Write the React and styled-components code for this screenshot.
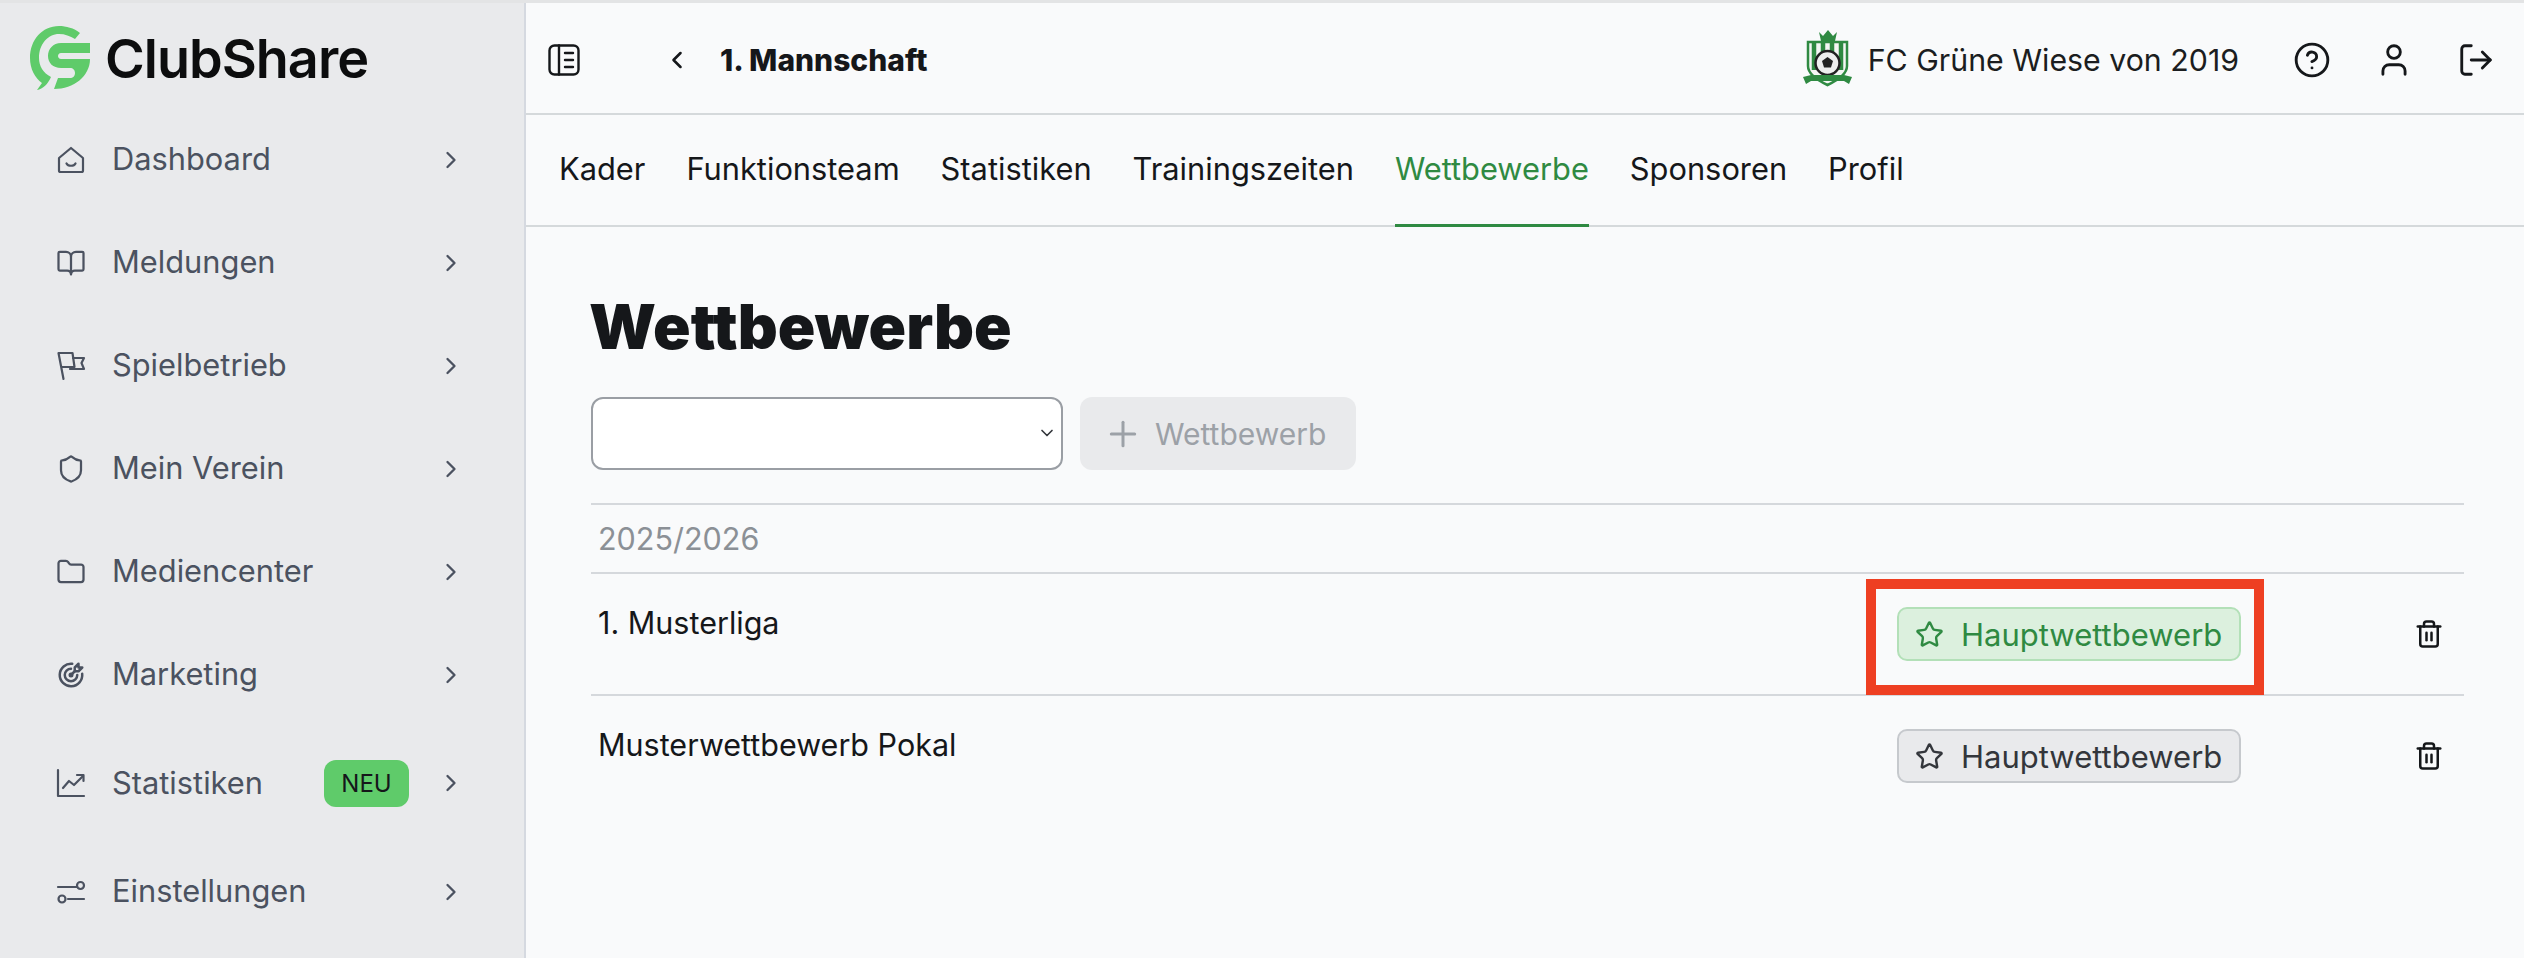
import React from 'react';
import styled, { createGlobalStyle } from 'styled-components';
import {
  BookOpen, ChevronDown, ChevronLeft, ChevronRight, CircleHelp, Folder, LogOut,
  Plus, Shield, Star, Trash2, User,
} from 'lucide-react';
import { TbTargetArrow } from 'react-icons/tb';

const GlobalStyle = createGlobalStyle`
  html, body { margin: 0; padding: 0; }
  body {
    background: #f9fafb;
    color: #15171a;
    font-family: Inter, "Noto Sans", sans-serif;
  }
  * { box-sizing: border-box; }
`;

const Page = styled.div`
  display: grid;
  grid-template-columns: 526px 1fr;
  height: 958px;
  overflow: hidden;
  border-top: 3px solid #e3e4e5;
`;

const Sidebar = styled.aside`
  background: #e9eaec;
  border-right: 2px solid #d5d9e0;
`;

const Brand = styled.div`
  display: flex;
  align-items: center;
  gap: 15px;
  height: 105px;
  padding: 6px 0 0 30px;
`;

const BrandName = styled.span`
  font-size: 54px;
  font-weight: 600;
  letter-spacing: -1px;
  color: #0c0d0e;
`;

const NavRow = styled.div`
  display: flex;
  align-items: center;
  height: ${(p) => (p.$tall ? '114px' : '103px')};
  padding: 0 59px 0 56px;
  color: #4b5260;
  font-size: 30.8px;
`;

const NavIcon = styled.span`
  display: flex;
  width: 30px;
  margin-right: 26px;
`;

const NavLabel = styled.span`
  flex: 1;
  margin-top: -2px;
`;

const NewBadge = styled.span`
  display: flex;
  align-items: center;
  justify-content: center;
  width: 85px;
  height: 47px;
  margin-right: 28px;
  border-radius: 12px;
  background: #5fcb6a;
  color: #15171a;
  font-size: 24px;
`;

const Main = styled.main`
  display: flex;
  flex-direction: column;
  min-width: 0;
`;

const TopBar = styled.header`
  display: flex;
  align-items: center;
  height: 112px;
  padding: 3px 29px 0 22px;
  border-bottom: 2px solid #d5d9db;
`;

const BackButton = styled.span`
  display: flex;
  margin-left: 83px;
  margin-right: 29px;
`;

const TeamTitle = styled.span`
  flex: 1;
  font-size: 30px;
  font-weight: 800;
`;

const Club = styled.div`
  display: flex;
  align-items: center;
  gap: 15px;
  margin-right: 54px;
  font-size: 30.3px;
  color: #1b1d20;
`;

const Actions = styled.div`
  display: flex;
  align-items: center;
  gap: 44px;
`;

const Tabs = styled.nav`
  display: flex;
  gap: 41px;
  height: 112px;
  padding: 0 0 0 33px;
  border-bottom: 2px solid #d5d9db;
`;

const Tab = styled.span`
  display: flex;
  align-items: center;
  height: 112px;
  padding-bottom: 2px;
  border-bottom: 3px solid ${(p) => (p.$active ? '#2f8a42' : 'transparent')};
  color: ${(p) => (p.$active ? '#2f8a42' : '#15171a')};
  font-size: 30.8px;
`;

const Content = styled.section`
  padding: 60px 60px 0 65px;
`;

const Heading = styled.h1`
  margin: 0 0 30px -2px;
  font-size: 62px;
  line-height: 80px;
  font-weight: 900;
  color: #15171a;
`;

const Controls = styled.div`
  display: flex;
  gap: 17px;
  margin-bottom: 33px;
`;

const SelectWrap = styled.div`
  position: relative;
  width: 472px;
`;

const Select = styled.select`
  width: 100%;
  height: 73px;
  appearance: none;
  background: #fff;
  border: 2px solid #9a9ea4;
  border-radius: 12px;
`;

const SelectArrow = styled(ChevronDown)`
  position: absolute;
  right: 6px;
  top: 26px;
  color: #33363b;
`;

const AddButton = styled.button`
  display: flex;
  align-items: center;
  gap: 12px;
  width: 276px;
  height: 73px;
  padding: 0 0 0 23px;
  border: none;
  border-radius: 12px;
  background: #e9eaec;
  color: #9ca1a7;
  font-family: inherit;
  font-size: 30px;
`;

const SeasonRow = styled.div`
  height: 71px;
  padding: 0 7px;
  display: flex;
  align-items: center;
  border-top: 2px solid #d5d8dc;
  border-bottom: 2px solid #d5d8dc;
  color: #8b9096;
  font-size: 30.5px;
`;

const Row = styled.div`
  display: flex;
  align-items: flex-start;
  height: ${(p) => (p.$last ? '120px' : '122px')};
  padding-top: 33px;
  border-bottom: ${(p) => (p.$last ? 'none' : '2px solid #d5d8dc')};
`;

const RowName = styled.span`
  flex: 1;
  margin-top: -2px;
  padding-left: 7px;
  font-size: 30.5px;
  line-height: 36px;
`;

const ButtonCell = styled.div`
  position: relative;
`;

const MainButton = styled.button`
  display: flex;
  align-items: center;
  gap: 17px;
  width: 344px;
  height: 54px;
  padding: 0 0 0 16px;
  border-radius: 10px;
  border: 2px solid ${(p) => (p.$active ? '#b3e0b8' : '#c6c9cd')};
  background: ${(p) => (p.$active ? '#dcf0de' : '#e9eaec')};
  color: ${(p) => (p.$active ? '#2f8a42' : '#33363b')};
  font-family: inherit;
  font-size: 31px;
`;

const Highlight = styled.div`
  position: absolute;
  left: -31px;
  right: -23px;
  top: -28px;
  bottom: -34px;
  border: 10px solid #ee3f22;
  pointer-events: none;
`;

const TrashCell = styled.div`
  display: flex;
  justify-content: flex-end;
  width: 223px;
  padding: 12px 20px 0 0;
`;

const HomeIcon = () => (
  <svg width="30" height="30" viewBox="0 0 30 30" fill="none" stroke="currentColor" strokeWidth="2.2" strokeLinecap="round" strokeLinejoin="round">
    <path d="M3 13 15 3l12 10v12.500a1.500 1.500 0 0 1-1.500 1.500h-21A1.500 1.500 0 0 1 3 25.500Z" />
    <path d="M10.500 18.500c1.500 3 7.500 3 9 0" />
  </svg>
);

const FlagIcon = () => (
  <svg width="30" height="30" viewBox="0 0 30 30" fill="none" stroke="currentColor" strokeWidth="2.2" strokeLinecap="round" strokeLinejoin="round">
    <path d="M7.500 28 2.500 2h14l2 14H6" />
    <path d="M17 7h11l-2.500 5 2.500 6H14l4-2" />
  </svg>
);

const ChartIcon = () => (
  <svg width="30" height="30" viewBox="0 0 30 30" fill="none" stroke="currentColor" strokeWidth="2.2" strokeLinecap="round" strokeLinejoin="round">
    <path d="M2 2v26h26" />
    <path d="M7 20l6-7 5 4 9-9" />
    <path d="M21 7h6.500v6" />
  </svg>
);

const SlidersIcon = () => (
  <svg width="30" height="30" viewBox="0 0 30 30" fill="none" stroke="currentColor" strokeWidth="2.2" strokeLinecap="round" strokeLinejoin="round">
    <path d="M2 10h19M12 22h16" />
    <circle cx="24.500" cy="8.500" r="3.500" />
    <circle cx="6" cy="22" r="3.500" />
  </svg>
);

const PanelIcon = () => (
  <svg width="32" height="32" viewBox="0 0 32 32" fill="none" stroke="#15171a" strokeWidth="2.400" strokeLinecap="round" strokeLinejoin="round">
    <rect x="1.500" y="1.500" width="29" height="29" rx="5" />
    <path d="M11 1.500v29M17 9h8M17 16h8M17 23h8" />
  </svg>
);

const Logo = () => (
  <svg width="60" height="65" viewBox="0 0 60 65">
    <path fill="#5fcb6a" d="M50 7C44 2 36 0 29 0 12 0 0 14 0 32 0 43 5 52 12 57L7 64C13 63 18 58 21 51 13 47 9 40 9 32 9 18 18 8 29 8 35 8 40 10 45 13Z" />
    <path fill="#5fcb6a" d="M60 17H31C23 17 18 23 18 30 18 37 23 42 31 42H40C43 42 45 44 45 47 45 50 43 52 40 52H28L24 63C44 63 60 50 60 33H31C29 33 28 31.500 28 30 28 28.500 29 27 31 27H60Z" />
  </svg>
);

const Crest = () => (
  <svg width="50" height="60" viewBox="0 0 50 60">
    <path fill="#2f8a42" d="M16 2 20 6 25 0 30 6 34 2 32 11H18Z" />
    <path fill="#f4f6f4" stroke="#2f8a42" strokeWidth="2.500" d="M5 12H44V36C44 44 33 51 24.500 55 16 51 5 44 5 36Z" />
    <path stroke="#2f8a42" strokeWidth="4.500" d="M11 13V40M20 13V24M29 13V24M38 13V40" />
    <circle cx="24.500" cy="33" r="12" fill="#eee" stroke="#222" strokeWidth="2.500" />
    <path fill="#222" d="M24.500 27l5.500 4-2 6.500h-7L19 31Z" />
    <path fill="#2f8a42" d="M0 47 8 45H41L49 47 46 54 41 51H8L3 54Z" />
  </svg>
);

const navItems = [
  { label: 'Dashboard', icon: <HomeIcon /> },
  { label: 'Meldungen', icon: <BookOpen size={30} strokeWidth={1.800} /> },
  { label: 'Spielbetrieb', icon: <FlagIcon /> },
  { label: 'Mein Verein', icon: <Shield size={30} strokeWidth={1.800} /> },
  { label: 'Mediencenter', icon: <Folder size={30} strokeWidth={1.800} /> },
  { label: 'Marketing', icon: <TbTargetArrow size={30} /> },
  { label: 'Statistiken', icon: <ChartIcon />, badge: 'NEU' },
  { label: 'Einstellungen', icon: <SlidersIcon /> },
];

const tabs = ['Kader', 'Funktionsteam', 'Statistiken', 'Trainingszeiten', 'Wettbewerbe', 'Sponsoren', 'Profil'];

export default function App() {
  return (
    <>
      <GlobalStyle />
      <Page>
        <Sidebar>
          <Brand>
            <Logo />
            <BrandName>ClubShare</BrandName>
          </Brand>
          {navItems.map((item) => (
            <NavRow key={item.label} $tall={!!item.badge}>
              <NavIcon>{item.icon}</NavIcon>
              <NavLabel>{item.label}</NavLabel>
              {item.badge && <NewBadge>{item.badge}</NewBadge>}
              <ChevronRight size={28} strokeWidth={2} />
            </NavRow>
          ))}
        </Sidebar>
        <Main>
          <TopBar>
            <PanelIcon />
            <BackButton><ChevronLeft size={28} strokeWidth={2.200} /></BackButton>
            <TeamTitle>1. Mannschaft</TeamTitle>
            <Club>
              <Crest />
              FC Grüne Wiese von 2019
            </Club>
            <Actions>
              <CircleHelp size={38} strokeWidth={1.800} />
              <User size={38} strokeWidth={1.800} />
              <LogOut size={38} strokeWidth={1.800} />
            </Actions>
          </TopBar>
          <Tabs>
            {tabs.map((t) => (
              <Tab key={t} $active={t === 'Wettbewerbe'}>{t}</Tab>
            ))}
          </Tabs>
          <Content>
            <Heading>Wettbewerbe</Heading>
            <Controls>
              <SelectWrap>
                <Select aria-label="Wettbewerb" />
                <SelectArrow size={20} strokeWidth={2} />
              </SelectWrap>
              <AddButton disabled><Plus size={40} strokeWidth={1.800} />Wettbewerb</AddButton>
            </Controls>
            <SeasonRow>2025/2026</SeasonRow>
            <Row>
              <RowName>1. Musterliga</RowName>
              <ButtonCell>
                <MainButton $active><Star size={29} strokeWidth={2} />Hauptwettbewerb</MainButton>
                <Highlight />
              </ButtonCell>
              <TrashCell><Trash2 size={30} strokeWidth={2} /></TrashCell>
            </Row>
            <Row $last>
              <RowName>Musterwettbewerb Pokal</RowName>
              <ButtonCell>
                <MainButton><Star size={29} strokeWidth={2} />Hauptwettbewerb</MainButton>
              </ButtonCell>
              <TrashCell><Trash2 size={30} strokeWidth={2} /></TrashCell>
            </Row>
          </Content>
        </Main>
      </Page>
    </>
  );
}
